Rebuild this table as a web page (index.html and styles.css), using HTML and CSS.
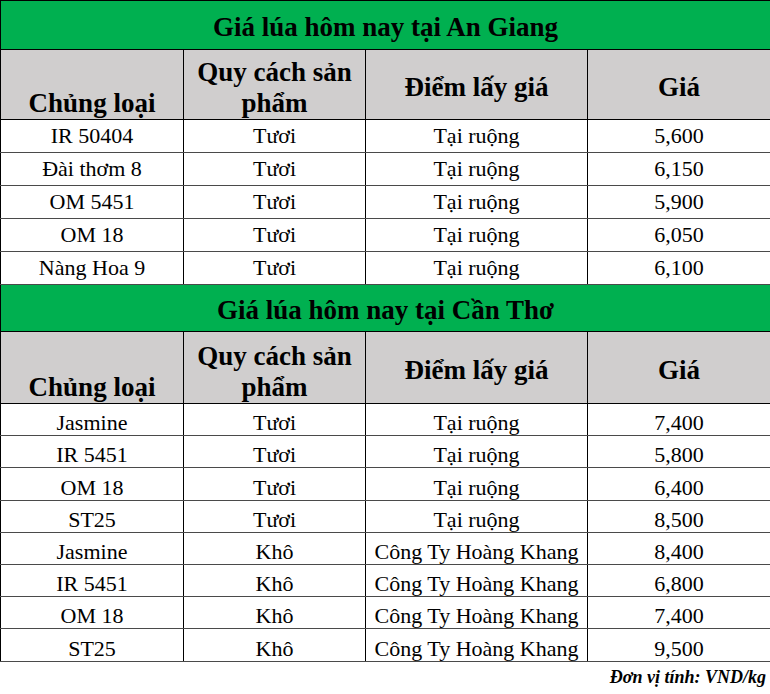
FILE: index.html
```html
<!DOCTYPE html>
<html lang="vi">
<head>
<meta charset="utf-8">
<title>Giá lúa hôm nay</title>
<link rel="stylesheet" href="styles.css">
</head>
<body>
<table class="price">
  <colgroup>
    <col class="c1"><col class="c2"><col class="c3"><col class="c4">
  </colgroup>
  <tbody>
    <tr><td colspan="4" class="title t1">Giá lúa hôm nay tại An Giang</td></tr>
    <tr class="head h1">
      <td class="bottom">Chủng loại</td>
      <td class="bottom">Quy cách sản phẩm</td>
      <td class="mid">Điểm lấy giá</td>
      <td class="mid">Giá</td>
    </tr>
    <tr class="row r1"><td>IR 50404</td><td>Tươi</td><td>Tại ruộng</td><td>5,600</td></tr>
    <tr class="row r1"><td>Đài thơm 8</td><td>Tươi</td><td>Tại ruộng</td><td>6,150</td></tr>
    <tr class="row r1"><td>OM 5451</td><td>Tươi</td><td>Tại ruộng</td><td>5,900</td></tr>
    <tr class="row r1"><td>OM 18</td><td>Tươi</td><td>Tại ruộng</td><td>6,050</td></tr>
    <tr class="row r1"><td>Nàng Hoa 9</td><td>Tươi</td><td>Tại ruộng</td><td>6,100</td></tr>
    <tr><td colspan="4" class="title t2">Giá lúa hôm nay tại Cần Thơ</td></tr>
    <tr class="head h2">
      <td class="bottom">Chủng loại</td>
      <td class="bottom">Quy cách sản phẩm</td>
      <td class="mid">Điểm lấy giá</td>
      <td class="mid">Giá</td>
    </tr>
    <tr class="row r2"><td>Jasmine</td><td>Tươi</td><td>Tại ruộng</td><td>7,400</td></tr>
    <tr class="row r2"><td>IR 5451</td><td>Tươi</td><td>Tại ruộng</td><td>5,800</td></tr>
    <tr class="row r2"><td>OM 18</td><td>Tươi</td><td>Tại ruộng</td><td>6,400</td></tr>
    <tr class="row r2"><td>ST25</td><td>Tươi</td><td>Tại ruộng</td><td>8,500</td></tr>
    <tr class="row r2"><td>Jasmine</td><td>Khô</td><td>Công Ty Hoàng Khang</td><td>8,400</td></tr>
    <tr class="row r2"><td>IR 5451</td><td>Khô</td><td>Công Ty Hoàng Khang</td><td>6,800</td></tr>
    <tr class="row r2"><td>OM 18</td><td>Khô</td><td>Công Ty Hoàng Khang</td><td>7,400</td></tr>
    <tr class="row r2"><td>ST25</td><td>Khô</td><td>Công Ty Hoàng Khang</td><td>9,500</td></tr>
  </tbody>
</table>
<div class="unit">Đơn vị tính: VND/kg</div>
</body>
</html>
```

FILE: styles.css
```css
html, body {
  margin: 0;
  padding: 0;
  background: #ffffff;
}

body {
  width: 770px;
  font-family: "Liberation Serif", "Times New Roman", serif;
  color: #000000;
}

.price {
  width: 770px;
  border-collapse: collapse;
  table-layout: fixed;
}

.c1 { width: 183px; }
.c2 { width: 182px; }
.c3 { width: 222px; }
.c4 { width: 183px; }

.price td {
  border: 1px solid #000000;
  padding: 0;
  text-align: center;
  vertical-align: middle;
}

.price td.title {
  background: #00b050;
  font-weight: bold;
  font-size: 27px;
  line-height: 30px;
  padding-top: 4px;
}

.price td.t1 { height: 44px; }
.price td.t2 { height: 42px; }

.head td {
  background: #d0cece;
  font-weight: bold;
  font-size: 27px;
  line-height: 31px;
}

.head td.bottom {
  vertical-align: bottom;
}

.head td.mid {
  padding-top: 6px;
}

.h1 td.bottom { height: 69px; }
.h1 td.mid { height: 63px; }
.h2 td.bottom { height: 71px; }
.h2 td.mid { height: 65px; }

.row td {
  font-size: 22px;
  line-height: 26px;
  vertical-align: bottom;
  border-top-color: #4a4a4a;
  border-bottom-color: #4a4a4a;
}

.r1 td { height: 29px; padding-bottom: 3px; }
.r2 td { height: 31.2px; line-height: 24px; }

.unit {
  text-align: right;
  font-weight: bold;
  font-style: italic;
  font-size: 18px;
  line-height: 22px;
  padding: 4px 4px 0 0;
}
```
